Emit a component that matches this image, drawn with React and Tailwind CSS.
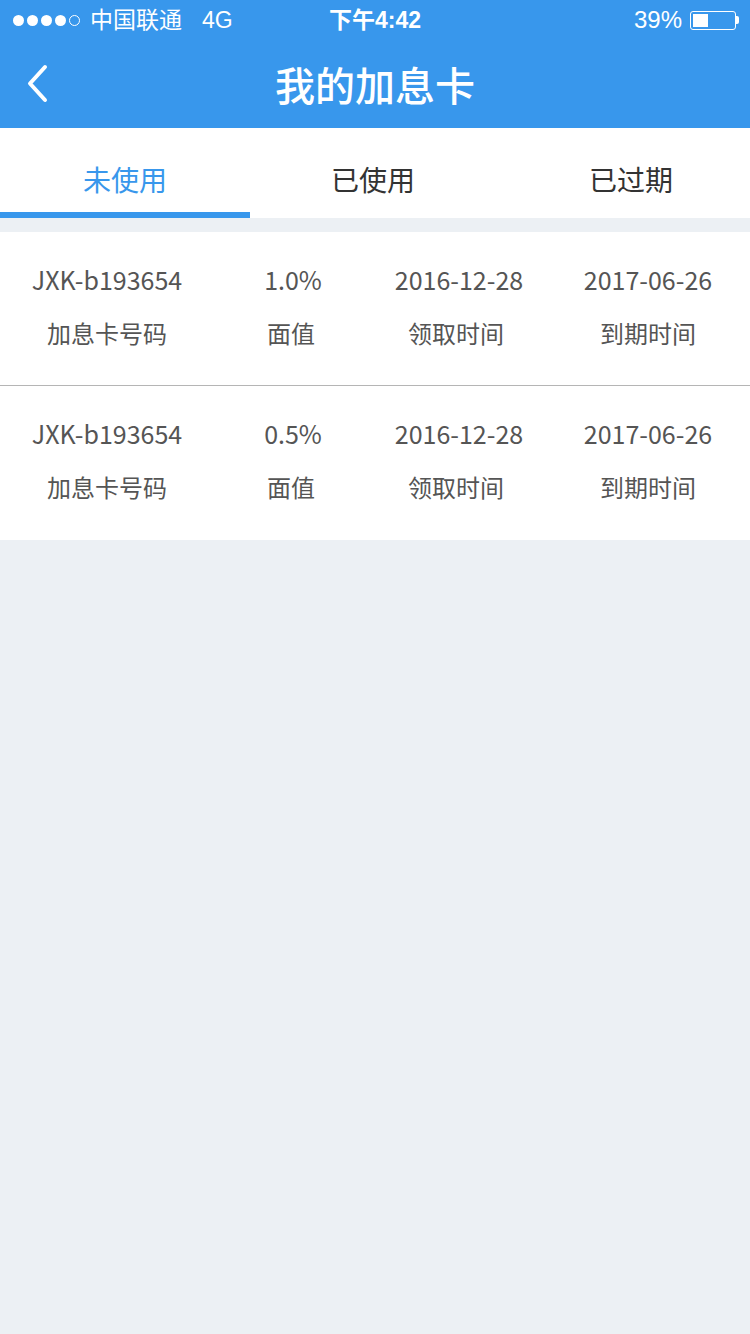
import React from "react";

const cjk = { fontFamily: '"Noto Sans CJK SC", "Noto Sans", sans-serif' };
const sys = { fontFamily: '"Liberation Sans", "Noto Sans CJK SC", sans-serif' };

function StatusBar() {
  return (
    <div className="h-[40px] flex items-center text-white text-[23px] relative" style={sys}>
      <div className="flex items-center pl-[13px] gap-[3px]">
        {[0, 1, 2, 3].map((i) => (
          <span key={i} className="w-[11px] h-[11px] rounded-full bg-white" />
        ))}
        <span className="w-[11px] h-[11px] rounded-full border border-white" />
      </div>
      <span className="ml-[10px]">中国联通</span>
      <span className="ml-[20px]">4G</span>
      <div className="flex-1" />
      <span className="mr-[8px] text-[24px]">39%</span>
      <div className="flex items-center mr-[11px]">
        <div className="w-[46px] h-[19px] border border-white rounded-[3px] p-[2px] flex">
          <div className="w-[15px] h-full bg-white" />
        </div>
        <div className="w-[3px] h-[8px] bg-white rounded-r-[2px]" />
      </div>
      <div className="absolute inset-0 flex items-center justify-center pointer-events-none">
        <span className="font-bold">下午4:42</span>
      </div>
    </div>
  );
}

function NavBar() {
  return (
    <div className="h-[88px] flex items-center relative">
      <svg className="ml-[26px]" width="24" height="40" viewBox="0 0 24 40">
        <path d="M19 3 L4 19.5 L19 36" fill="none" stroke="white" strokeWidth="4" strokeLinecap="round" strokeLinejoin="round" />
      </svg>
      <div className="absolute inset-0 flex items-center justify-center">
        <span className="text-white text-[40px] font-medium" style={cjk}>我的加息卡</span>
      </div>
    </div>
  );
}

function Tabs() {
  return (
    <div className="bg-white h-[90px] grid grid-cols-[250px_246px_1fr]" style={cjk}>
      <div className="flex flex-col">
        <div className="flex-1 flex items-center justify-center pt-[18px] text-[28px] text-[#3897ec]">未使用</div>
        <div className="h-[6px] bg-[#3897ec]" />
      </div>
      <div className="flex flex-col">
        <div className="flex-1 flex items-center justify-center pt-[18px] text-[28px] text-[#333333]">已使用</div>
        <div className="h-[6px]" />
      </div>
      <div className="flex flex-col pl-[16px]">
        <div className="flex-1 flex items-center justify-center pt-[18px] text-[28px] text-[#333333]">已过期</div>
        <div className="h-[6px]" />
      </div>
    </div>
  );
}

function Row({ code, rate, start, end, border }) {
  return (
    <div className={"bg-white h-[154px] flex flex-col justify-center pb-[6px] " + (border ? "border-b border-[#b5b5b5]" : "")} style={cjk}>
      <div className="grid grid-cols-[214px_158px_174px_1fr] text-[#555555]">
        <div className="text-center text-[25px] leading-[36px]">{code}</div>
        <div className="text-center text-[25px] leading-[36px]">{rate}</div>
        <div className="text-center text-[25px] leading-[36px]">{start}</div>
        <div className="text-center text-[25px] leading-[36px]">{end}</div>
      </div>
      <div className="grid grid-cols-[214px_158px_174px_1fr] text-[#555555] mt-[18px]">
        <div className="text-center text-[24px] leading-[36px]">加息卡号码</div>
        <div className="text-center text-[24px] leading-[36px] pr-[4px]">面值</div>
        <div className="text-center text-[24px] leading-[36px] pr-[6px]">领取时间</div>
        <div className="text-center text-[24px] leading-[36px]">到期时间</div>
      </div>
    </div>
  );
}

export default function App() {
  return (
    <div className="w-[750px] min-h-[1334px] bg-[#ecf0f4]">
      <div className="bg-[#3897ec]">
        <StatusBar />
        <NavBar />
      </div>
      <Tabs />
      <div className="h-[14px]" />
      <Row code="JXK-b193654" rate="1.0%" start="2016-12-28" end="2017-06-26" border />
      <Row code="JXK-b193654" rate="0.5%" start="2016-12-28" end="2017-06-26" />
    </div>
  );
}
